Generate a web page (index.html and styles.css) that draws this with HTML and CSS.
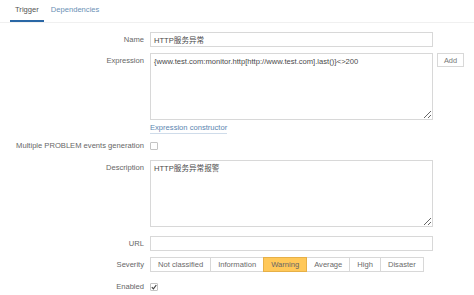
FILE: index.html
```html
<!DOCTYPE html>
<html lang="en">
<head>
    <meta charset="UTF-8">
    <meta name="viewport" content="width=device-width, initial-scale=1.0">
    <title>Trigger</title>
    <link rel="stylesheet" href="styles.css">
</head>
<body>
    <div class="tabs">
        <span class="tab active">Trigger</span>
        <span class="tab">Dependencies</span>
    </div>
    <div class="form">
        <div class="row row-name">
            <label class="label">Name</label>
            <div class="field"><input class="input" type="text" value="HTTP服务异常"></div>
        </div>
        <div class="row row-expr">
            <label class="label">Expression</label>
            <div class="field">
                <div class="expr-line">
                    <textarea class="area" spellcheck="false">{www.test.com:monitor.http[http://www.test.com].last()}&lt;&gt;200</textarea>
                    <button class="add-btn">Add</button>
                </div>
                <a class="link">Expression constructor</a>
            </div>
        </div>
        <div class="row row-multi">
            <label class="label">Multiple PROBLEM events generation</label>
            <div class="field"><span class="check"></span></div>
        </div>
        <div class="row row-desc">
            <label class="label">Description</label>
            <div class="field"><textarea class="area" spellcheck="false">HTTP服务异常报警</textarea></div>
        </div>
        <div class="row row-url">
            <label class="label">URL</label>
            <div class="field"><input class="input" type="text"></div>
        </div>
        <div class="row row-sev">
            <label class="label">Severity</label>
            <div class="field">
                <div class="severity">
                    <span class="sev">Not classified</span>
                    <span class="sev">Information</span>
                    <span class="sev selected">Warning</span>
                    <span class="sev">Average</span>
                    <span class="sev">High</span>
                    <span class="sev">Disaster</span>
                </div>
            </div>
        </div>
        <div class="row row-enabled">
            <label class="label">Enabled</label>
            <div class="field">
                <span class="check">
                    <svg width="6" height="6" viewBox="0 0 6 6"><path d="M0.8 3.2 L2.4 4.8 L5.3 1" fill="none" stroke="#444" stroke-width="1.2"/></svg>
                </span>
            </div>
        </div>
    </div>
</body>
</html>
```

FILE: styles.css
```css
body {
    margin: 0;
    font-family: 'Liberation Sans', Arial, 'Noto Sans CJK SC', sans-serif;
    font-size: 7.6px;
    color: #666;
    background: #fff;
}

.tabs {
    display: flex;
    gap: 2px;
    padding-left: 10px;
    height: 22px;
    border-bottom: 1px solid #f0f0f0;
}

.tab {
    padding: 0 5px;
    line-height: 20px;
    color: #6a90b5;
}

.tab.active {
    color: #555;
    border-bottom: 2px solid #2a67a5;
}

.form {
    padding-top: 9px;
}

.row {
    display: grid;
    grid-template-columns: 144px 283px;
    column-gap: 6px;
    align-items: start;
}

.row-expr { margin-top: 6px; }
.row-multi { margin-top: 4px; }
.row-desc { margin-top: 7px; }
.row-url { margin-top: 9px; }
.row-sev { margin-top: 6px; }
.row-enabled { margin-top: 7px; }

.label {
    text-align: right;
    line-height: 15px;
    color: #666;
}

.input, .area {
    box-sizing: border-box;
    width: 283px;
    margin: 0;
    border: 1px solid #d8d8d8;
    background: #fff;
    font-family: inherit;
    font-size: 7.6px;
    color: #4a4a4a;
    outline: none;
}

.input {
    height: 15px;
    padding: 0 3px;
}

.area {
    display: block;
    height: 67px;
    padding: 2px 3px;
    line-height: 11px;
}

.expr-line {
    display: flex;
    align-items: flex-start;
    width: 320px;
}

.add-btn {
    flex: none;
    margin-left: 4px;
    width: 27px;
    height: 14px;
    padding: 0;
    border: 1px solid #d8d8d8;
    background: #fff;
    font-family: inherit;
    font-size: 7.4px;
    color: #777;
}

.link {
    display: inline-block;
    margin-top: 2px;
    line-height: 11px;
    color: #5a86b0;
    border-bottom: 1px solid #cfdcea;
}

.row-multi .field, .row-enabled .field {
    display: flex;
    align-items: center;
    height: 15px;
}

.check {
    box-sizing: border-box;
    display: flex;
    align-items: center;
    justify-content: center;
    width: 8px;
    height: 8px;
    border: 1px solid #c4c4c4;
    border-radius: 1px;
    background: #fff;
}

.severity {
    display: flex;
}

.sev {
    box-sizing: border-box;
    height: 15px;
    line-height: 13px;
    padding: 0 7px;
    border: 1px solid #d8d8d8;
    margin-left: -1px;
    color: #6a6a6a;
    background: #fff;
}

.sev:first-child {
    margin-left: 0;
}

.sev.selected {
    background: #ffc859;
    border-color: #e6b048;
    color: #666;
    position: relative;
}
```
